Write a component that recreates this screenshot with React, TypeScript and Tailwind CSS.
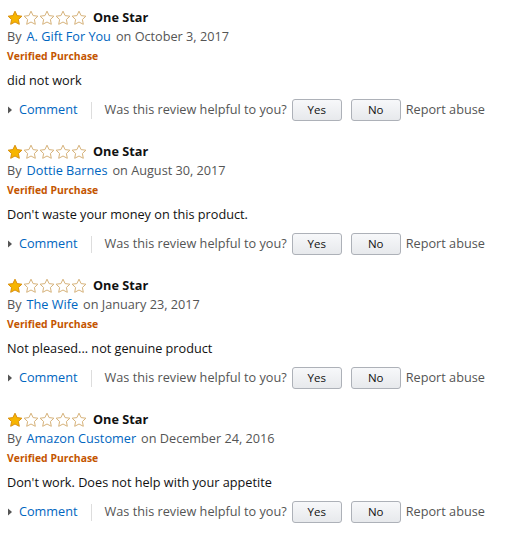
import React from 'react';

type Review = { author: string; date: string; body: string };

const reviews: Review[] = [
  { author: 'A. Gift For You', date: 'October 3, 2017', body: 'did not work' },
  { author: 'Dottie Barnes', date: 'August 30, 2017', body: "Don't waste your money on this product." },
  { author: 'The Wife', date: 'January 23, 2017', body: 'Not pleased... not genuine product' },
  { author: 'Amazon Customer', date: 'December 24, 2016', body: "Don't work. Does not help with your appetite" },
];

const STAR = 'M8 1.2l2.1 4.4 4.8.6-3.5 3.3.9 4.8L8 12l-4.3 2.3.9-4.8L1.1 6.2l4.8-.6z';

function Stars() {
  return (
    <div className="flex">
      {[0, 1, 2, 3, 4].map((i) => (
        <svg key={i} width="16" height="16" viewBox="0 0 16 16">
          <path
            d={STAR}
            fill={i === 0 ? '#f7b500' : '#ffffff'}
            stroke={i === 0 ? '#d9900f' : '#d6b27a'}
            strokeWidth="1"
            strokeLinejoin="round"
          />
        </svg>
      ))}
    </div>
  );
}

function ReviewItem({ r }: { r: Review }) {
  return (
    <div className="pl-[7px] pb-[22px]">
      <div className="flex items-center h-[18px]">
        <Stars />
        <span className="ml-[6px] text-[12.7px] font-bold text-[#111]">One Star</span>
      </div>
      <div className="h-[19px] flex items-center text-[12.7px] text-[#555]">
        By
        <span className="ml-[5px] text-[#0066c0]">{r.author}</span>
        <span className="ml-[5px]">on {r.date}</span>
      </div>
      <div className="mt-[1px] h-[19px] flex items-center text-[10.4px] font-bold text-[#c45500]">Verified Purchase</div>
      <div className="mt-[5px] h-[19px] flex items-center text-[12.7px] text-[#111]">{r.body}</div>
      <div className="mt-[9px] flex items-center h-[22px] text-[12.7px]">
        <svg width="6" height="8" viewBox="0 0 6 8" className="mr-[6px]">
          <path d="M1 0.5l4 3.5-4 3.5z" fill="#555" />
        </svg>
        <span className="text-[#0066c0]">Comment</span>
        <span className="ml-[13px] mr-[13px] w-px h-[17px] bg-[#ddd]" />
        <span className="text-[#555]">Was this review helpful to you?</span>
        <button className="ml-[5px] w-[50px] h-[22px] rounded-[3px] border border-[#adb1b8] bg-gradient-to-b from-[#f7f8fa] to-[#e7e9ec] text-[11.5px] text-[#111]">
          Yes
        </button>
        <button className="ml-[9px] w-[50px] h-[22px] rounded-[3px] border border-[#adb1b8] bg-gradient-to-b from-[#f7f8fa] to-[#e7e9ec] text-[11.5px] text-[#111]">
          No
        </button>
        <span className="ml-[5px] text-[#555]">Report abuse</span>
      </div>
    </div>
  );
}

export default function App() {
  return (
    <div className="w-[512px] h-[542px] bg-white pt-[9px] font-['Open_Sans',sans-serif]">
      {reviews.map((r) => (
        <ReviewItem key={r.author} r={r} />
      ))}
    </div>
  );
}
